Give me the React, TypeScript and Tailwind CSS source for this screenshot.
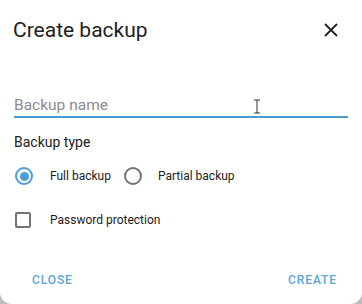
import React from "react";

const App: React.FC = () => {
  return (
    <div
      className="w-[362px] h-[304px] bg-[#bdbdbd] overflow-hidden"
      style={{ fontFamily: "Roboto, 'Liberation Sans', sans-serif" }}
    >
      <div className="w-full h-full bg-white rounded-b-[12px] flex flex-col">
        {/* header */}
        <div className="flex items-center justify-between pl-[13px] pr-[24px] pt-[15px] h-[44px]">
          <h2 className="text-[21px] leading-[24px] text-[#212121]">Create backup</h2>
          <svg width="14" height="14" viewBox="0 0 14 14" className="text-[#212121]">
            <path d="M1 1L13 13M13 1L1 13" stroke="currentColor" strokeWidth="1.8" />
          </svg>
        </div>

        {/* name input */}
        <div className="mx-[14px] mt-[51px] relative">
          <div className="text-[15.5px] leading-[20px] text-[#8c8c8c] pb-[1px] border-b-2 border-[#4c9bcd]">
            Backup name
          </div>
          <svg
            width="8"
            height="15"
            viewBox="0 0 8 15"
            className="absolute left-[239px] top-[4px]"
          >
            <path d="M1 1h6M4 1v13M1 14h6" stroke="#333" strokeWidth="1" fill="none" />
          </svg>
        </div>

        <div className="mx-[14px] mt-[15px] text-[14px] leading-[18px] text-[#212121]">Backup type</div>

        {/* radios */}
        <div className="flex items-center mt-[13px] h-[24px] pl-[15px] text-[12px] text-[#212121]">
          <span className="w-[18px] h-[18px] rounded-full border-2 border-[#4c9bdb] flex items-center justify-center">
            <span className="w-[9px] h-[9px] rounded-full bg-[#4c9bdb]" />
          </span>
          <span className="ml-[17px]">Full backup</span>
          <span className="ml-[13px] w-[18px] h-[18px] rounded-full border-2 border-[#737373]" />
          <span className="ml-[16px]">Partial backup</span>
        </div>

        {/* checkbox */}
        <div className="flex items-center mt-[22px] h-[20px] pl-[15px] text-[12px] text-[#212121]">
          <span className="w-[16px] h-[16px] rounded-[2px] border-2 border-[#737373]" />
          <span className="ml-[19px]">Password protection</span>
        </div>

        {/* actions */}
        <div className="mt-auto flex justify-between pl-[32px] pr-[25px] pb-[17px] text-[12px] leading-[14px] font-medium tracking-[0.9px] text-[#5aa5d5]">
          <span>CLOSE</span>
          <span>CREATE</span>
        </div>
      </div>
    </div>
  );
};

export default App;
